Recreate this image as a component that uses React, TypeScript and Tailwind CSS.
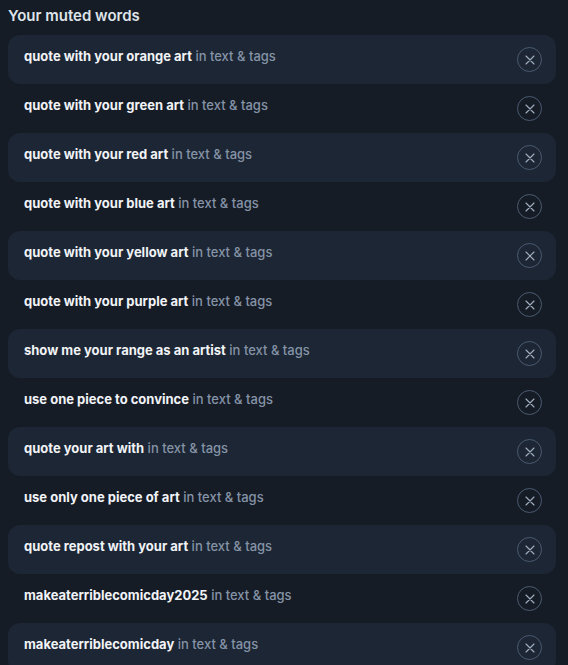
import React from "react";

const words = [
  "quote with your orange art",
  "quote with your green art",
  "quote with your red art",
  "quote with your blue art",
  "quote with your yellow art",
  "quote with your purple art",
  "show me your range as an artist",
  "use one piece to convince",
  "quote your art with",
  "use only one piece of art",
  "quote repost with your art",
  "makeaterriblecomicday2025",
  "makeaterriblecomicday",
];

export default function App() {
  return (
    <div
      className="w-[568px] h-[665px] overflow-hidden bg-[#161c26]"
      style={{ fontFamily: "Inter, 'Noto Sans', sans-serif" }}
    >
      <div className="h-[35px] px-2 pt-[6px] text-[15px] leading-[20px] font-semibold text-[#dfe4ea]">
        Your muted words
      </div>
      <div className="flex flex-col">
        {words.map((w, i) => (
          <div
            key={w}
            className={
              "ml-2 mr-3 h-[49px] rounded-xl flex items-center justify-between pl-4 pr-[14px] " +
              (i % 2 === 0 ? "bg-[#1c2634]" : "")
            }
          >
            <div className="-mt-[8px] text-[13px] leading-[16px]">
              <span className="font-bold text-[#f1f3f6]">{w}</span>
              <span className="font-medium text-[#8593a6]"> in text &amp; tags</span>
            </div>
            <button className="w-[25px] h-[25px] rounded-full border border-[#4a5a70] flex items-center justify-center">
              <svg width="10" height="10" viewBox="0 0 10 10" fill="none">
                <path d="M1 1L9 9M9 1L1 9" stroke="#a2afc0" strokeWidth="1.1" strokeLinecap="round" />
              </svg>
            </button>
          </div>
        ))}
      </div>
    </div>
  );
}
